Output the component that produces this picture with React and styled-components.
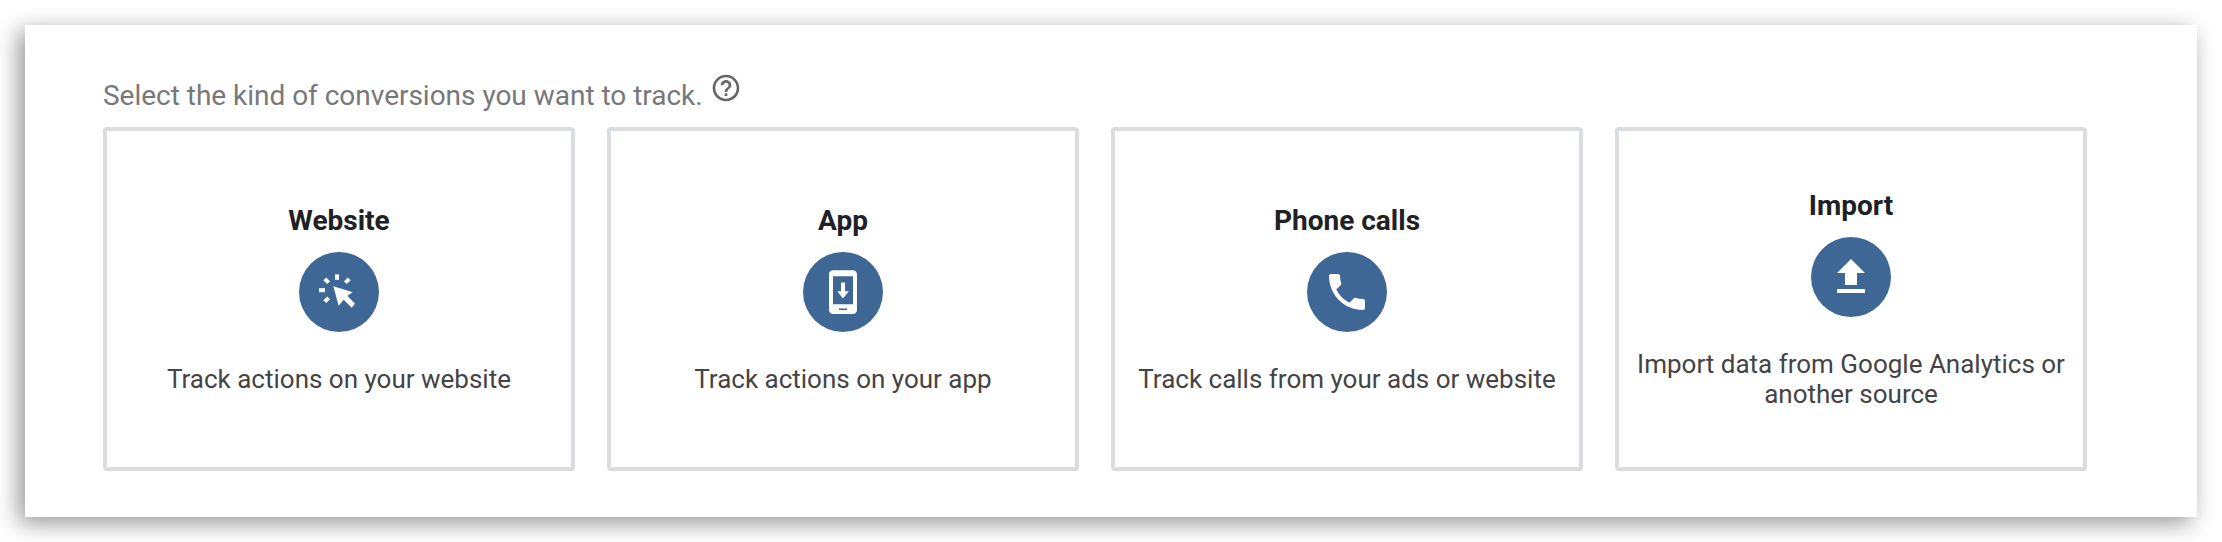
import React from "react";
import styled, { createGlobalStyle } from "styled-components";

const Global = createGlobalStyle`
  html, body { margin: 0; padding: 0; background: #fff; }
  body { font-family: Roboto, "Liberation Sans", sans-serif; }
`;

const Page = styled.div`
  padding: 25px;
  height: 542px;
  box-sizing: border-box;
  overflow: hidden;
`;

const Panel = styled.section`
  width: 2172px;
  height: 492px;
  box-sizing: border-box;
  padding: 51px 110px 46px 78px;
  background: #fff;
  box-shadow: -6px 6px 22px rgba(0, 0, 0, 0.42);
`;

const Heading = styled.div`
  display: flex;
  align-items: flex-start;
  gap: 7px;
  height: 51px;
`;

const Label = styled.span`
  font-size: 28px;
  line-height: 40px;
  letter-spacing: -0.02px;
  color: #787878;
`;

const HelpIcon = styled.svg`
  width: 32px;
  height: 32px;
  margin-top: -4px;
  fill: #666;
`;

const Grid = styled.div`
  display: grid;
  grid-template-columns: repeat(4, 472px);
  gap: 32px;
`;

const Card = styled.div`
  height: 344px;
  box-sizing: border-box;
  border: 4px solid #dbdcdf;
  border-radius: 4px;
  padding: 1px 10px 0;
  display: flex;
  flex-direction: column;
  align-items: center;
  justify-content: center;
  text-align: center;
`;

const Title = styled.div`
  font-size: 28px;
  line-height: 32px;
  font-weight: 700;
  color: #202124;
`;

const Badge = styled.div`
  width: 80px;
  height: 80px;
  margin: 15px 0 32px;
  border-radius: 50%;
  background: #3f6796;
  display: flex;
  align-items: center;
  justify-content: center;
`;

const Glyph = styled.svg`
  width: 48px;
  height: 48px;
  fill: #fff;
`;

const Description = styled.div`
  font-size: 26px;
  line-height: 30px;
  color: #444;
`;

const ClickIcon = () => (
  <Glyph viewBox="0 0 24 24">
    <path d="M9.17 9.17L18.83 12.17L16.17 13.83L20 17.83L18.33 19.83L14.33 15.83L11.83 18.83Z" />
    <rect x="10" y="3.2" width="2" height="2.7" />
    <rect x="2" y="10.1" width="3" height="2" />
    <rect x="4.5" y="5.4" width="2.7" height="2" transform="rotate(45 5.85 6.4)" />
    <rect x="14.8" y="5.4" width="2.7" height="2" transform="rotate(-45 16.15 6.4)" />
    <rect x="4.5" y="14.9" width="2.7" height="2" transform="rotate(-45 5.85 15.9)" />
  </Glyph>
);

const AppIcon = () => (
  <Glyph viewBox="0 0 24 24">
    <path
      fillRule="evenodd"
      d="M7 1.17h10c1.1 0 2 .9 2 2V21c0 1.1-.9 2-2 2H7c-1.1 0-2-.9-2-2V3.17c0-1.1.9-2 2-2zM7 4.17V18.17H17V4.17zM10 20.2V21h4v-.8z"
    />
    <path d="M11 7.2h2v4.4h1.9L12 15.2 9.1 11.6H11z" />
  </Glyph>
);

const PhoneIcon = () => (
  <Glyph viewBox="0 0 24 24">
    <path d="M6.62 10.79c1.44 2.83 3.76 5.14 6.59 6.59l2.2-2.2c.27-.27.67-.36 1.02-.24 1.12.37 2.33.57 3.57.57.55 0 1 .45 1 1V20c0 .55-.45 1-1 1-9.39 0-17-7.61-17-17 0-.55.45-1 1-1h3.5c.55 0 1 .45 1 1 0 1.25.2 2.45.57 3.57.11.35.03.74-.25 1.02l-2.2 2.2z" />
  </Glyph>
);

const UploadIcon = () => (
  <Glyph viewBox="0 0 24 24">
    <path d="M9 16h6v-6h4l-7-7-7 7h4zm-4 2h14v2H5z" />
  </Glyph>
);

const options = [
  { title: "Website", icon: <ClickIcon />, text: "Track actions on your website" },
  { title: "App", icon: <AppIcon />, text: "Track actions on your app" },
  { title: "Phone calls", icon: <PhoneIcon />, text: "Track calls from your ads or website" },
  { title: "Import", icon: <UploadIcon />, text: "Import data from Google Analytics or another source" },
];

export default function App() {
  return (
    <Page>
      <Global />
      <Panel>
        <Heading>
          <Label>Select the kind of conversions you want to track.</Label>
          <HelpIcon viewBox="0 0 24 24">
            <path d="M11 18h2v-2h-2v2zm1-16C6.48 2 2 6.48 2 12s4.48 10 10 10 10-4.48 10-10S17.52 2 12 2zm0 18c-4.41 0-8-3.59-8-8s3.59-8 8-8 8 3.59 8 8-3.59 8-8 8zm0-14c-2.21 0-4 1.79-4 4h2c0-1.1.9-2 2-2s2 .9 2 2c0 2-3 1.75-3 5h2c0-2.25 3-2.5 3-5 0-2.21-1.79-4-4-4z" />
          </HelpIcon>
        </Heading>
        <Grid>
          {options.map((o) => (
            <Card key={o.title}>
              <Title>{o.title}</Title>
              <Badge>{o.icon}</Badge>
              <Description>{o.text}</Description>
            </Card>
          ))}
        </Grid>
      </Panel>
    </Page>
  );
}
